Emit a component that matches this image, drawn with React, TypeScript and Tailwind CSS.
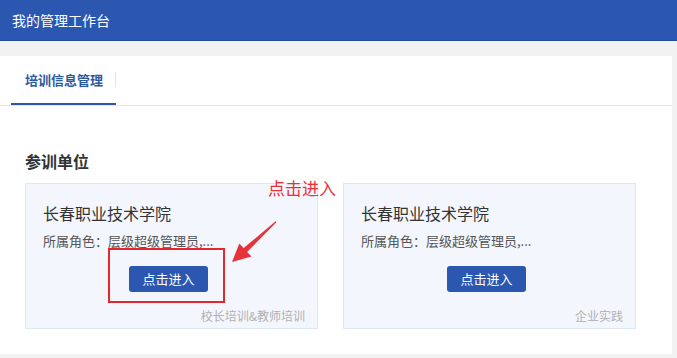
import React from "react";

const font = { fontFamily: '"Noto Sans CJK SC", "Noto Sans", sans-serif' };

function Card({ footer }: { footer: string }) {
  return (
    <div className="flex h-[146px] w-[293px] flex-col border border-[#dfe6f3] bg-[#f3f6fc] pl-[17px] pr-[12px] pt-[17px]">
      <div className="text-[16px] leading-[24px] text-[#333]">长春职业技术学院</div>
      <div className="mt-[6px] text-[13px] leading-[20px] text-[#555]">所属角色：层级超级管理员,...</div>
      <button className="ml-[86px] mt-[15px] flex h-[26px] w-[79px] items-center justify-center rounded-[3px] bg-[#2b57b1] text-[13px] text-white">
        点击进入
      </button>
      <div className="mt-[16px] flex justify-end text-[12px] leading-[16px] text-[#b0b0b0]">{footer}</div>
    </div>
  );
}

export default function App() {
  return (
    <div className="relative h-[358px] w-[677px] overflow-hidden bg-[#f2f2f2]" style={font}>
      <div className="flex h-[41px] items-center border-b border-[#234a9a] bg-[#2b57b1] px-[12px] text-[14px] text-white">
        我的管理工作台
      </div>
      <div className="mt-[15px] h-[298px] w-[672px] bg-white">
        <div className="flex h-[50px] border-b border-[#e6e6e6]">
          <div className="ml-[11px] flex h-[49px] w-[105px] items-center border-b-2 border-[#2b57b1] pl-[14px]">
            <span className="text-[13px] font-bold text-[#2c5aa0]">培训信息管理</span>
            <span className="ml-auto h-[15px] w-px bg-[#e3e3e3]" />
          </div>
        </div>
        <div className="px-[25px]">
          <div className="mt-[43px] text-[16px] font-bold leading-[24px] text-[#333]">参训单位</div>
          <div className="mt-[10px] flex gap-[25px]">
            <Card footer="校长培训&教师培训" />
            <Card footer="企业实践" />
          </div>
        </div>
      </div>

      <div className="absolute left-[268px] top-[177px] text-[17px] leading-[22px] text-[#e8323a]">点击进入</div>
      <div className="absolute left-[108px] top-[248px] h-[55px] w-[117px] border-2 border-[#e5272d]" />
      <svg className="pointer-events-none absolute left-0 top-0" width="677" height="358" viewBox="0 0 677 358">
        <polygon
          points="276.4,222.2 247.1,251.9 251.5,256.5 232,262 239.3,243.5 243.7,248.1 275.6,221.2"
          fill="#e8323a"
        />
      </svg>
    </div>
  );
}
